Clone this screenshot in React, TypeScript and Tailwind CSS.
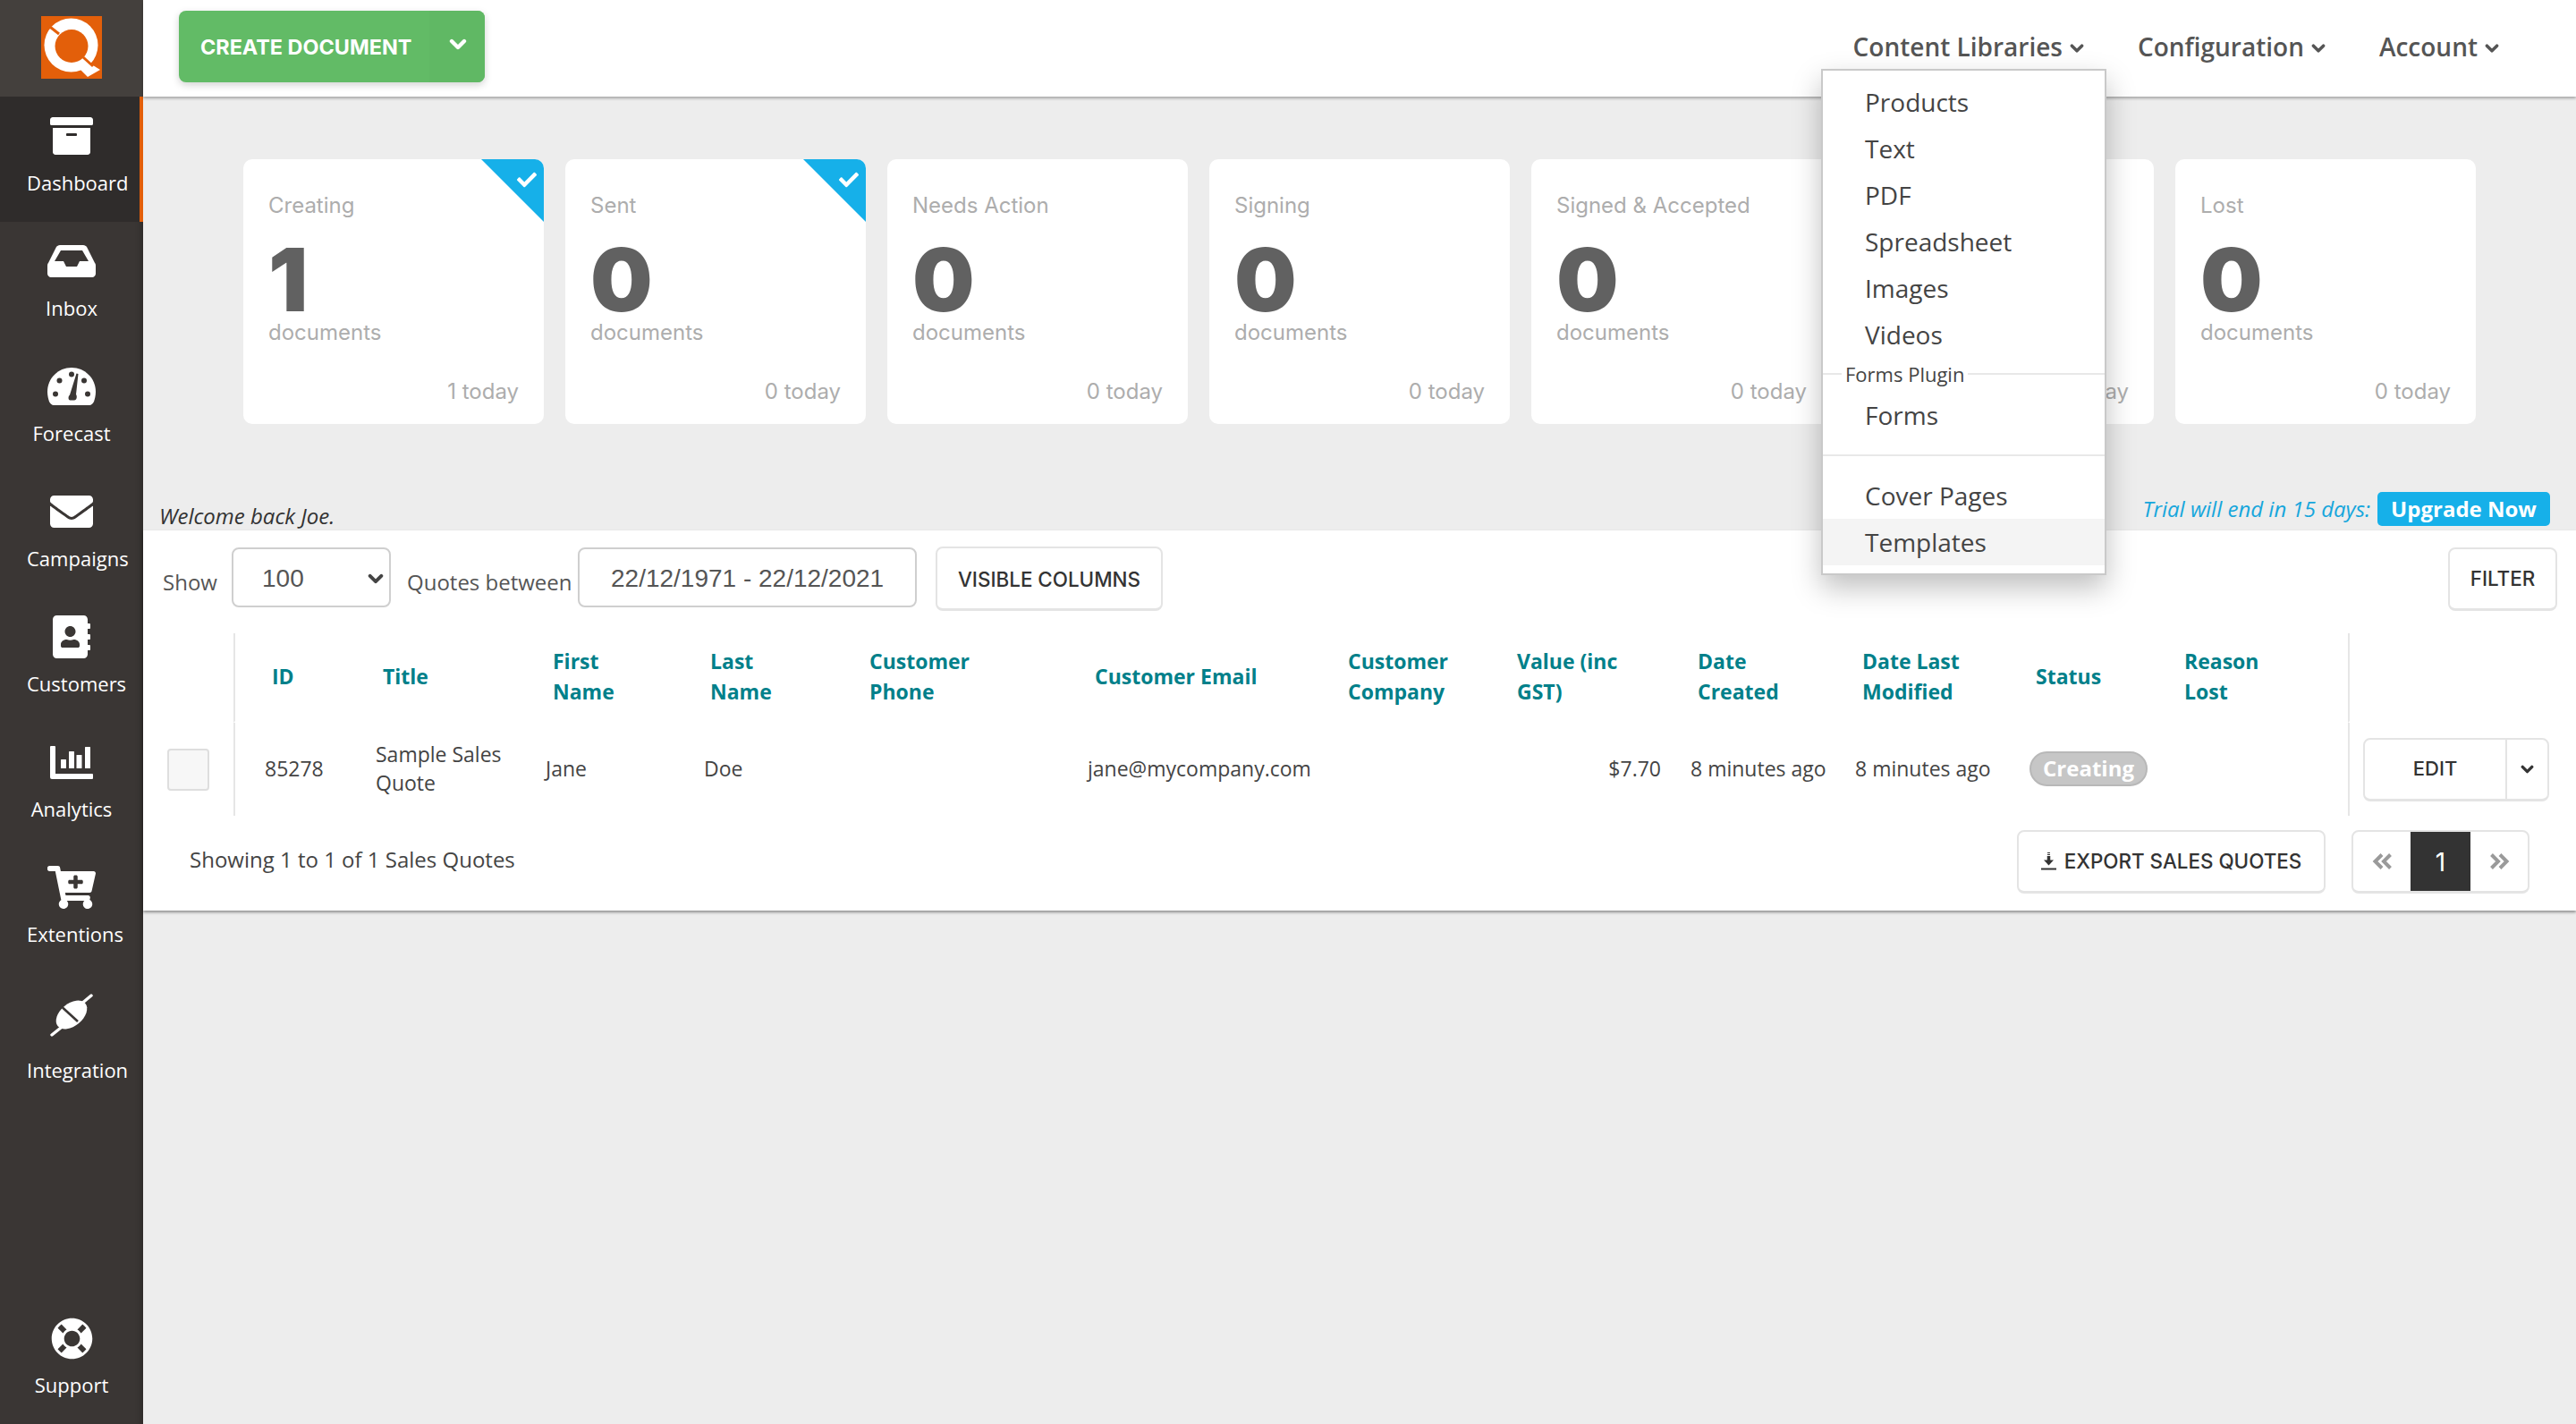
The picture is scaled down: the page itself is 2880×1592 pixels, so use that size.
import React from "react";
import {
  FaArchive,
  FaEnvelope,
  FaAddressBook,
  FaCartPlus,
  FaLifeRing,
  FaCheck,
} from "react-icons/fa";

function Logo() {
  return (
    <svg width="68" height="70" viewBox="0 0 68 70">
      <rect width="68" height="70" fill="#e35f0a" />
      <circle cx="33.5" cy="32.5" r="30" fill="#fff" />
      <path d="M45 47 L66 60 L52 68 L38 54 Z" fill="#fff" />
      <circle cx="34" cy="33.5" r="18.5" fill="#e35f0a" />
      <path d="M10.5 12.5 L20 20" stroke="#e35f0a" strokeWidth="3" />
      <path d="M47 46 L58 56" stroke="#e35f0a" strokeWidth="3" />
    </svg>
  );
}

function InboxIcon() {
  return (
    <svg width="54" height="36" viewBox="0 0 54 36">
      <path d="M14 0H40C42 0 43 1 44 2L53 20C54 21 54 22 54 24V32C54 34 52 36 50 36H4C2 36 0 34 0 32V24C0 22 0 21 1 20L10 2C11 1 12 0 14 0Z" fill="#fff" />
      <path d="M15 6H39L46 18H36L33 24H21L18 18H8Z" fill="#3a3634" />
    </svg>
  );
}

function GaugeIcon() {
  return (
    <svg width="54" height="42" viewBox="0 0 54 42">
      <path d="M27 0C12 0 0 12 0 27C0 31 1 35 2 38C3 40 5 42 7 42H47C49 42 51 40 52 38C53 35 54 31 54 27C54 12 42 0 27 0Z" fill="#fff" />
      <g fill="#3a3634">
        <circle cx="13.5" cy="14.5" r="3" />
        <circle cx="27" cy="7.5" r="3" />
        <circle cx="41" cy="14.5" r="3" />
        <circle cx="9" cy="29.5" r="3" />
        <circle cx="45" cy="29.5" r="3" />
        <path d="M32.5 6.5 L34.5 7 L32 30 C33.5 32 33 36.5 30 36.5 H25.5 C23 36.5 23 32 25 30.5 Z" />
      </g>
    </svg>
  );
}

function AnalyticsIcon() {
  return (
    <svg width="48" height="37" viewBox="0 0 48 37" fill="#fff">
      <path d="M0 1a1 1 0 0 1 1-1h4a1 1 0 0 1 1 1v30h41a1 1 0 0 1 1 1v4a1 1 0 0 1-1 1H2a2 2 0 0 1-2-2Z" />
      <rect x="12" y="15" width="6" height="10" rx="0.5" />
      <rect x="21" y="6" width="6" height="19" rx="0.5" />
      <rect x="29.5" y="10" width="6" height="15" rx="0.5" />
      <rect x="39" y="1" width="6" height="24" rx="0.5" />
    </svg>
  );
}

function PlugIcon() {
  return (
    <svg width="48" height="48" viewBox="0 0 48 48">
      <path d="M2 46 L12 38" stroke="#fff" strokeWidth="3.4" strokeLinecap="round" />
      <path d="M34 12 L46 2" stroke="#fff" strokeWidth="3.4" strokeLinecap="round" />
      <ellipse cx="24" cy="23.5" rx="20" ry="12.5" transform="rotate(-40 24 23.5)" fill="#fff" />
      <path d="M14 15.5 L31 31" stroke="#3a3634" strokeWidth="2.6" />
    </svg>
  );
}

function ExportIcon() {
  return (
    <svg width="17" height="20" viewBox="0 0 17 20" fill="none" stroke="#333">
      <path d="M8.5 0 V3" strokeWidth="3" strokeDasharray="1 1" />
      <path d="M8.5 4 V9" strokeWidth="3.5" />
      <path d="M3 8.5 H14 L8.5 14.5 Z" fill="#333" strokeWidth="0" />
      <path d="M0 18.5 H17" strokeWidth="2" />
    </svg>
  );
}

function Chevron({ cls, color = "#555" }: { cls: string; color?: string }) {
  return (
    <svg className={cls} viewBox="0 0 20 13" fill="none" stroke={color} strokeWidth="4.4" strokeLinecap="round" strokeLinejoin="round">
      <path d="M3 3 L10 10 L17 3" />
    </svg>
  );
}

function DoubleAngle({ flip }: { flip?: boolean }) {
  return (
    <svg className={flip ? "h-[18px] w-[23px] rotate-180" : "h-[18px] w-[23px]"} viewBox="0 0 23 18" fill="none" stroke="#9a9a9a" strokeWidth="4">
      <path d="M11 1.5 L3.5 9 L11 16.5" />
      <path d="M20.5 1.5 L13 9 L20.5 16.5" />
    </svg>
  );
}

const navItems = [
  { label: "Dashboard", icon: <FaArchive size={48} color="#fff" />, cls: "h-[140px] pt-[20px] bg-[#2f2c2b] shadow-[inset_-4px_0_0_#e35f0a]", labelCls: "mt-[13px]" },
  { label: "Inbox", icon: <InboxIcon />, cls: "h-[140px] pt-[20px]", labelCls: "mt-[13px]" },
  { label: "Forecast", icon: <GaugeIcon />, cls: "h-[140px] pt-[20px]", labelCls: "mt-[13px]" },
  { label: "Campaigns", icon: <FaEnvelope size={48} color="#fff" />, cls: "h-[140px] pt-[20px]", labelCls: "mt-[13px]" },
  { label: "Customers", icon: <FaAddressBook size={48} color="#fff" />, cls: "h-[140px] pt-[20px]", labelCls: "mt-[13px]" },
  { label: "Analytics", icon: <AnalyticsIcon />, cls: "h-[140px] pt-[20px]", labelCls: "mt-[13px]" },
  { label: "Extentions", icon: <FaCartPlus size={54} color="#fff" />, cls: "h-[140px] pt-[20px]", labelCls: "mt-[13px]" },
  { label: "Integration", icon: <PlugIcon />, cls: "h-[150px] pt-[23px]", labelCls: "mt-[22px]" },
];

function SideItem({ item }: { item: (typeof navItems)[number] }) {
  return (
    <div className={`flex flex-col items-center ${item.cls}`}>
      <div className="flex h-[48px] w-[54px] items-center justify-center">{item.icon}</div>
      <div className={`h-[30px] w-[100px] text-center text-[22px] leading-[30px] text-white ${item.labelCls}`}>
        {item.label}
      </div>
    </div>
  );
}

function Sidebar() {
  return (
    <aside className="flex h-[1592px] w-[160px] shrink-0 flex-col bg-[#3a3634] shadow-[inset_-7px_0_6px_-5px_rgba(0,0,0,0.25)]">
      <div className="flex h-[108px] items-start justify-center bg-[#44403d] pt-[18px]">
        <Logo />
      </div>
      {navItems.map((n) => (
        <SideItem key={n.label} item={n} />
      ))}
      <div className="mt-auto flex h-[140px] flex-col items-center pt-[20px]">
        <div className="flex h-[48px] w-[54px] items-center justify-center">
          <FaLifeRing size={47} color="#fff" />
        </div>
        <div className="mt-[13px] h-[30px] w-[100px] text-center text-[22px] leading-[30px] text-white">Support</div>
      </div>
    </aside>
  );
}

function Menu() {
  const Item = ({ t, active }: { t: string; active?: boolean }) => (
    <div className={`flex h-[52px] items-center pl-[47px] text-[28px] text-[#444] ${active ? "bg-[#f4f4f4]" : ""}`}>{t}</div>
  );
  return (
    <div className="absolute top-[77px] left-[1876px] z-20 w-[319px] border-2 border-[#c9c9c9] bg-white pt-[9px] shadow-[0_14px_30px_rgba(0,0,0,0.25)]">
      <Item t="Products" />
      <Item t="Text" />
      <Item t="PDF" />
      <Item t="Spreadsheet" />
      <Item t="Images" />
      <Item t="Videos" />
      <div className="mt-[3px] mb-[5px] flex h-[30px] items-center">
        <div className="h-[2px] w-[21px] bg-[#e8e8e8]" />
        <span className="px-[4px] text-[22px] text-[#444]">Forms Plugin</span>
        <div className="h-[2px] flex-1 bg-[#e8e8e8]" />
      </div>
      <Item t="Forms" />
      <div className="mt-[18px] h-[2px] bg-[#e8e8e8]" />
      <div className="h-[18px]" />
      <Item t="Cover Pages" />
      <Item t="Templates" active />
      <div className="h-[9px]" />
    </div>
  );
}

function NavLink({ t }: { t: string }) {
  return (
    <div className="flex items-center gap-[8px] text-[28px] font-semibold text-[#555]">
      <span>{t}</span>
      <Chevron cls="mt-[3px] h-[12px] w-[16px]" />
    </div>
  );
}

function Header() {
  return (
    <header className="relative z-10 flex h-[108px] items-start bg-white pt-[12px] pr-[86px] pl-[40px] shadow-[0_2px_3px_rgba(0,0,0,0.3)]">
      <div className="flex h-[80px] w-[342px] overflow-hidden rounded-[8px] bg-[#62bb66] font-['Inter'] text-white shadow-[0_3px_8px_rgba(0,0,0,0.18)]">
        <div className="flex w-[280px] items-center pt-[2px] pl-[24px] text-[23.4px] font-bold">CREATE DOCUMENT</div>
        <div className="flex flex-1 items-center justify-center bg-[#60b864] pb-[6px] pl-[2px]">
          <Chevron cls="h-[13px] w-[20px]" color="#fff" />
        </div>
      </div>
      <nav className="mt-[20px] ml-auto flex h-[40px] items-center gap-[60px]">
        <NavLink t="Content Libraries" />
        <NavLink t="Configuration" />
        <NavLink t="Account" />
      </nav>
      <Menu />
    </header>
  );
}

const cards = [
  { t: "Creating", n: "1", d: "documents", today: "1 today", done: true },
  { t: "Sent", n: "0", d: "documents", today: "0 today", done: true },
  { t: "Needs Action", n: "0", d: "documents", today: "0 today" },
  { t: "Signing", n: "0", d: "documents", today: "0 today" },
  { t: "Signed & Accepted", n: "0", d: "documents", today: "0 today" },
  { t: "", n: "", d: "", today: "0 today" },
  { t: "Lost", n: "0", d: "documents", today: "0 today" },
];

function Card({ c }: { c: (typeof cards)[number] }) {
  return (
    <div className="relative flex h-[296px] w-[336px] flex-col overflow-hidden rounded-[10px] bg-white pt-[34px] pr-[28px] pl-[28px] font-['Inter'] text-[#adadad]">
      {c.done && (
        <div className="absolute top-0 right-0 h-[70px] w-[70px] bg-[#16b0e9] [clip-path:polygon(0_0,100%_0,100%_100%)]">
          <FaCheck size={22} color="#fff" className="absolute top-[12px] right-[8px]" />
        </div>
      )}
      <div className="h-[36px] text-[24px] leading-[36px]">{c.t}</div>
      <div className="mt-[23px] h-[83px] font-['Inter'] text-[98px] leading-[83px] font-black text-[#616161]">{c.n}</div>
      <div className="h-[36px] text-[24px] leading-[36px]">{c.d}</div>
      <div className="mt-[30px] text-right text-[24px] leading-[36px]">{c.today}</div>
    </div>
  );
}

const cols = ["w-[101px]", "w-[151px]", "w-[190px]", "w-[177px]", "w-[178px]", "w-[251px]", "w-[284px]", "w-[196px]", "w-[194px]", "w-[184px]", "w-[195px]", "w-[173px]", "w-[191px]", "w-[255px]"];

const thBase = "p-0 pb-[2px] border-b-2 border-white text-left align-middle text-[23px] leading-[34px] font-bold text-[#00808a]";
const thCls = `${thBase} pl-[16px]`;
const thTight = `${thBase} pl-[15px]`;
const tdCls = "p-0 pb-[2px] pl-[8px] align-middle text-[23px] leading-[32px] text-[#444]";

function Table() {
  return (
    <table className="w-[2720px] table-fixed border-separate border-spacing-0">
      <colgroup>
        {cols.map((c, i) => (
          <col key={i} className={c} />
        ))}
      </colgroup>
      <thead>
        <tr className="h-[100px]">
          <th className="border-b-2 border-white p-0" />
          <th className={`${thBase} border-l-2 border-l-[#e6e6e6] pl-[41px]`}>ID</th>
          <th className={thCls}>Title</th>
          <th className={thCls}>First<br />Name</th>
          <th className={thTight}>Last<br />Name</th>
          <th className={thTight}>Customer<br />Phone</th>
          <th className={thCls}>Customer Email</th>
          <th className={thTight}>Customer<br />Company</th>
          <th className={`${thBase} pl-[8px]`}>Value (inc<br />GST)</th>
          <th className={thCls}>Date<br />Created</th>
          <th className={thCls}>Date Last<br />Modified</th>
          <th className={thTight}>Status</th>
          <th className={`${thBase} pl-[8px]`}>Reason<br />Lost</th>
          <th className="border-b-2 border-l-2 border-white border-l-[#e6e6e6] p-0" />
        </tr>
      </thead>
      <tbody>
        <tr className="h-[104px]">
          <td className="p-0 pl-[27px] align-middle">
            <div className="h-[47px] w-[47px] rounded-[4px] border-2 border-[#dedede] bg-[#f7f7f7]" />
          </td>
          <td className={`${tdCls} border-l-2 border-[#e6e6e6] pl-[33px]`}>85278</td>
          <td className={tdCls}>Sample Sales Quote</td>
          <td className={tdCls}>Jane</td>
          <td className={tdCls}>Doe</td>
          <td className={tdCls} />
          <td className={tdCls}>jane@mycompany.com</td>
          <td className={tdCls} />
          <td className={`${tdCls} pr-[25px] pl-0 text-right`}>$7.70</td>
          <td className={tdCls}>8 minutes ago</td>
          <td className={tdCls}>8 minutes ago</td>
          <td className={tdCls}>
            <span className="inline-flex h-[39px] w-[132px] items-center justify-center rounded-full border-2 border-[#b8b8b8] bg-[#c6c6c6] text-[24px] font-bold text-white">
              Creating
            </span>
          </td>
          <td className={tdCls} />
          <td className="border-l-2 border-[#e6e6e6] p-0 pl-[15px] align-middle">
            <div className="flex h-[71px] w-[208px] rounded-[8px] border-2 border-b-[3px] border-[#e4e4e4] text-[#333]">
              <div className="flex w-[157px] items-center justify-center font-['Inter'] text-[22px] font-medium">EDIT</div>
              <div className="flex flex-1 items-center justify-center border-l-2 border-[#e4e4e4]">
                <Chevron cls="h-[10px] w-[15px]" color="#333" />
              </div>
            </div>
          </td>
        </tr>
      </tbody>
    </table>
  );
}

const btnCls = "flex items-center justify-center rounded-[8px] border-2 border-b-[3px] border-[#e4e4e4] bg-white font-['Inter'] text-[22.4px] font-medium text-[#333]";

function Toolbar() {
  return (
    <div className="flex h-[115px] items-start pt-[19px] pr-[21px] pl-[22px] text-[#555]">
      <span className="w-[77px] pt-[22px] text-[24px] leading-[34px]">Show</span>
      <div className="flex h-[67px] w-[178px] items-center justify-between rounded-[8px] border-2 border-[#cfcfcf] pt-[3px] pr-[6px] pl-[32px] font-['Liberation_Sans'] text-[28px]">
        <span>100</span>
        <Chevron cls="h-[12px] w-[18px]" color="#444" />
      </div>
      <span className="ml-[18px] w-[191px] pt-[22px] text-[24px] leading-[34px]">Quotes between</span>
      <div className="flex h-[67px] w-[379px] items-center rounded-[8px] border-2 border-[#cfcfcf] pt-[3px] pl-[35px] font-['Liberation_Sans'] text-[28px]">
        22/12/1971 - 22/12/2021
      </div>
      <div className={`${btnCls} mt-[-1px] ml-[21px] h-[72px] w-[254px] pt-[2px]`}>VISIBLE COLUMNS</div>
      <div className={`${btnCls} ml-auto h-[71px] w-[122px]`}>FILTER</div>
    </div>
  );
}

function Footer() {
  return (
    <div className="flex h-[106px] items-start pt-[16px] pr-[52px] pl-[52px]">
      <span className="mt-[16px] text-[24px] leading-[34px] text-[#444]">Showing 1 to 1 of 1 Sales Quotes</span>
      <div className={`${btnCls} ml-auto h-[71px] w-[345px] gap-[9px]`}>
        <ExportIcon />
        EXPORT SALES QUOTES
      </div>
      <div className="ml-[29px] flex h-[71px] w-[199px] overflow-hidden rounded-[8px] border-2 border-b-[3px] border-[#e4e4e4]">
        <div className="flex flex-1 items-center justify-center"><DoubleAngle /></div>
        <div className="mt-[-2px] mb-[-3px] flex w-[67px] items-center justify-center bg-[#333] font-['Inter'] text-[28px] text-white">1</div>
        <div className="flex flex-1 items-center justify-center"><DoubleAngle flip /></div>
      </div>
    </div>
  );
}

export default function App() {
  return (
    <div className="flex h-[1592px] w-[2880px] overflow-hidden bg-[#ededed] font-['Open_Sans',sans-serif]">
      <Sidebar />
      <main className="flex min-w-0 flex-1 flex-col">
        <Header />
        <div className="flex gap-[24px] pt-[70px] pl-[112px]">
          {cards.map((c, i) => (
            <Card key={i} c={c} />
          ))}
        </div>
        <div className="mt-[76px] flex h-[43px] items-start justify-between pr-[29px] pl-[18px]">
          <span className="pt-[12px] text-[24px] leading-[30px] text-[#333] italic">Welcome back Joe.</span>
          <div className="flex items-center gap-[8px]">
            <span className="text-[24px] text-[#16a6dc] italic">Trial will end in 15 days:</span>
            <span className="flex h-[38px] w-[193px] items-center justify-center rounded-[5px] bg-[#16b0e9] text-[24px] font-bold text-white">Upgrade Now</span>
          </div>
        </div>
        <section className="h-[425px] bg-white shadow-[0_2px_3px_rgba(0,0,0,0.4)]">
          <Toolbar />
          <Table />
          <Footer />
        </section>
      </main>
    </div>
  );
}
